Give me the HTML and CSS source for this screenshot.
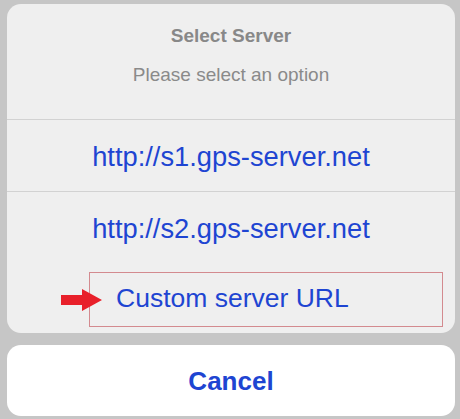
FILE: index.html
```html
<!DOCTYPE html>
<html>
<head>
<meta charset="utf-8">
<link rel="stylesheet" href="styles.css">
</head>
<body>
<div class="screen">
  <div class="sheet">
    <div class="header">
      <div class="title">Select Server</div>
      <div class="subtitle">Please select an option</div>
    </div>
    <div class="option sep">http://s1.gps-server.net</div>
    <div class="option sep">http://s2.gps-server.net</div>
    <div class="option custom">
      <span class="highlight"></span>
      <svg class="arrow" width="42" height="24" viewBox="0 0 42 24"><path d="M0 7 H21 V1 L41 12 L21 23 V17 H0 Z" fill="#e8202a"/></svg>
      <span class="custom-text">Custom server URL</span>
    </div>
  </div>
  <div class="cancel">Cancel</div>
</div>
</body>
</html>
```
FILE: styles.css
```css
html, body {
  margin: 0;
  padding: 0;
  background: #c6c6c6;
}
.screen {
  width: 460px;
  height: 419px;
  box-sizing: border-box;
  padding: 4px 5px 0 7px;
  display: flex;
  flex-direction: column;
  gap: 12px;
  font-family: "Liberation Sans", Arial, sans-serif;
}
.sheet {
  background: #efefef;
  border-radius: 14px;
  height: 329px;
  display: flex;
  flex-direction: column;
  overflow: hidden;
}
.header {
  height: 115px;
  display: flex;
  flex-direction: column;
  align-items: center;
  box-sizing: border-box;
  padding-top: 21px;
}
.title {
  font-size: 19px;
  font-weight: bold;
  color: #888;
  line-height: 22px;
}
.subtitle {
  font-size: 19px;
  color: #8a8a8a;
  line-height: 22px;
  margin-top: 17px;
}
.option {
  height: 72px;
  display: flex;
  align-items: center;
  justify-content: center;
  font-size: 27.3px;
  color: #1e45d2;
  box-sizing: border-box;
  padding-top: 3px;
}
.sep {
  border-top: 1px solid #d2d2d2;
}
.custom {
  position: relative;
  flex: 1;
  height: auto;
  justify-content: flex-start;
  padding-left: 109px;
  padding-top: 0;
  font-size: 26.5px;
}
.highlight {
  position: absolute;
  left: 82px;
  top: 9px;
  width: 354px;
  height: 55px;
  box-sizing: border-box;
  border: 1px solid #d38a8f;
}
.arrow {
  position: absolute;
  left: 54px;
  top: 25px;
}
.cancel {
  background: #fff;
  border-radius: 14px;
  height: 71px;
  display: flex;
  align-items: center;
  justify-content: center;
  font-size: 26px;
  font-weight: bold;
  color: #1e45d2;
  padding-top: 1px;
  box-sizing: border-box;
}
```
